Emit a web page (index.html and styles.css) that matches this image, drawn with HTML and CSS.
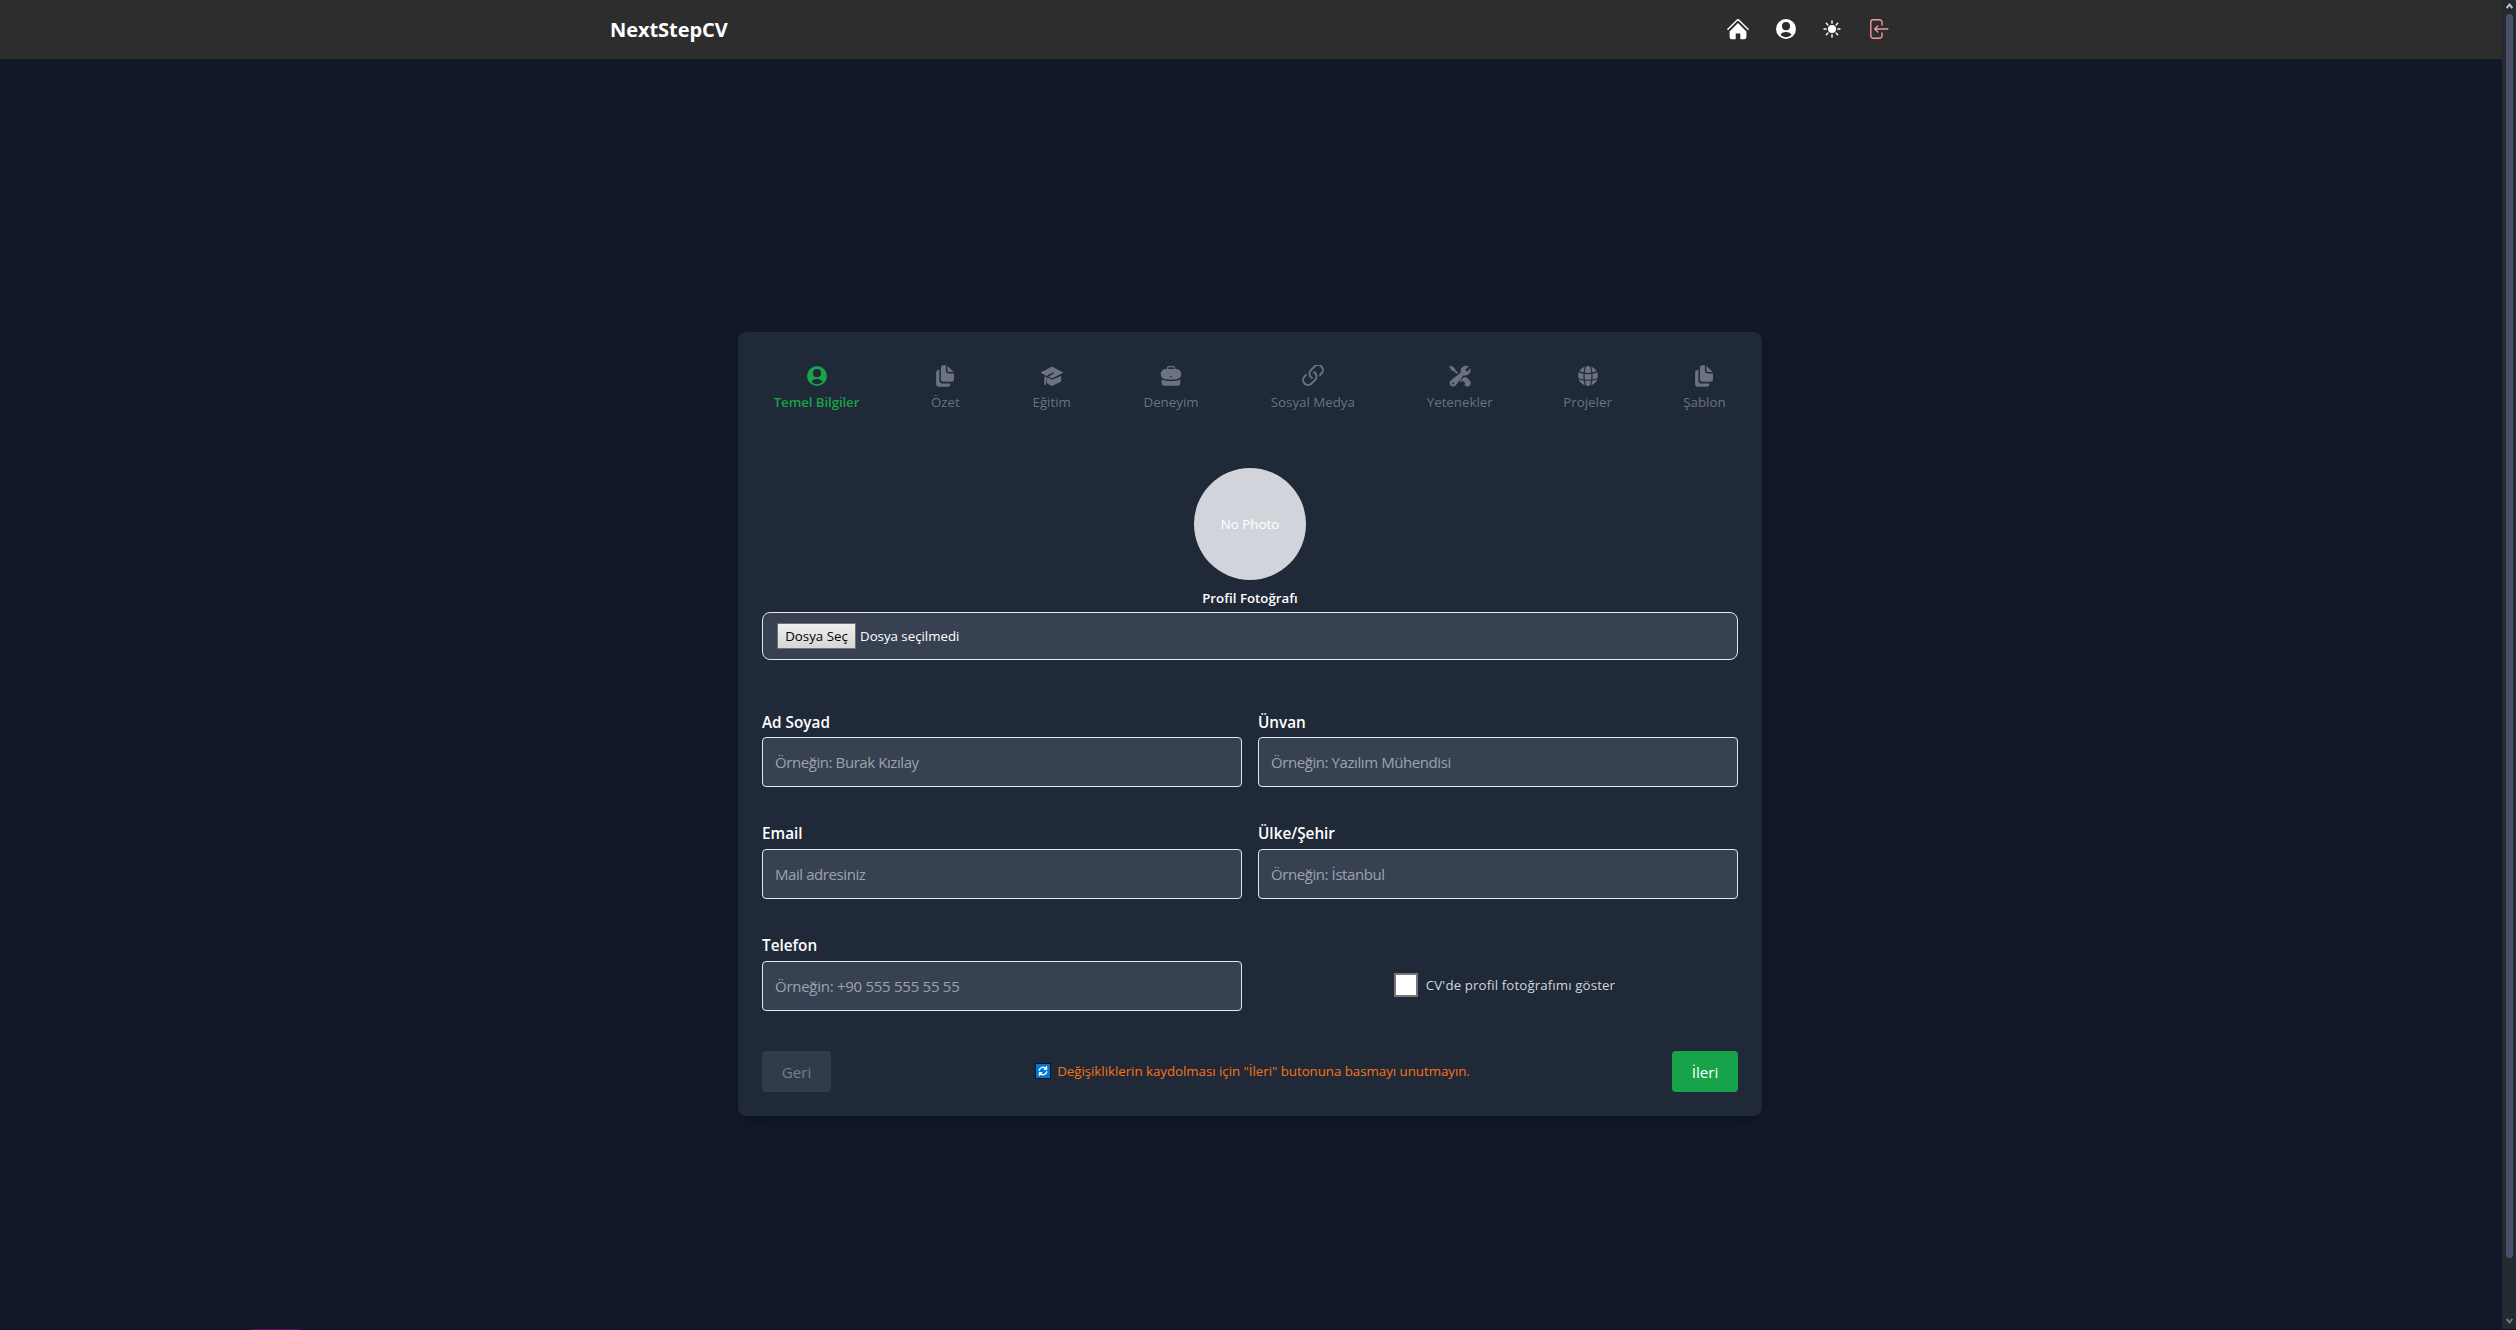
FILE: index.html
```html
<!DOCTYPE html>
<html lang="tr">
<head>
<meta charset="utf-8">
<title>NextStepCV</title>
<link rel="stylesheet" href="styles.css">
</head>
<body>
<svg class="defs" width="0" height="0">
  <symbol id="user" viewBox="0 0 24 24"><path fill-rule="evenodd" d="M12 1.1a10.9 10.9 0 1 0 0 21.8 10.9 10.9 0 0 0 0-21.8zM12 4.400a4.400 4.500 0 1 1 0 9 4.400 4.500 0 0 1 0-9zM12 15.300c3 0 5.300 1.400 6 3.100-1.500 1.600-3.700 2.500-6 2.500s-4.500-.9-6-2.500c.7-1.700 3-3.100 6-3.100z"/></symbol>
  <symbol id="copy" viewBox="0 0 24 24"><path d="M7.500 3a2.600 2.600 0 0 1 2.600-2.600H13v6.200A2.600 2.600 0 0 0 15.600 9.200H21.800v6.600a2.600 2.600 0 0 1-2.600 2.600H10.100a2.600 2.600 0 0 1-2.600-2.600zM14.600.8 21.500 7.600H16a1.400 1.400 0 0 1-1.400-1.400zM5.900 5.200v12a3 3 0 0 0 3 3h9A3 3 0 0 1 15 23.600H5.300a3 3 0 0 1-3-3V8.200c0-1.700 1.500-3 3.600-3z"/></symbol>
</svg>
<div class="page">
  <header class="header">
    <div class="bar">
      <div class="logo">NextStepCV</div>
      <nav class="nav">
        <svg class="home" viewBox="0 0 22 22"><path class="line" d="M.9 11.300 9.800 2.400a1.700 1.700 0 0 1 2.400 0l8.900 8.900"/><path d="M11 5.100 19.400 13.500V19a2.200 2.200 0 0 1-2.200 2.200H13.300v-5.800H8.700v5.800H4.800A2.200 2.200 0 0 1 2.600 19v-5.500z"/></svg>
        <svg class="person"><use href="#user"/></svg>
        <svg class="sun" viewBox="0 0 22 22"><circle cx="11" cy="11" r="4"/><path class="line" d="M11 3v2.200M11 16.800V19M3 11h2.200M16.800 11H19M5.300 5.300l1.600 1.600M15.100 15.100l1.600 1.600M5.300 16.700l1.600-1.600M15.100 6.900l1.600-1.600"/></svg>
        <svg class="exit" viewBox="0 0 20 22"><path class="line" d="M13 7V4.300a2.500 2.500 0 0 0-2.500-2.500H4.300a2.500 2.500 0 0 0-2.500 2.500v13.400a2.500 2.500 0 0 0 2.500 2.500h6.200a2.500 2.500 0 0 0 2.500-2.500V15M18.800 11H6M8.800 8 5.700 11l3.100 3"/></svg>
      </nav>
    </div>
  </header>
  <main class="main">
    <form class="card">
      <div class="tabs">
        <div class="tab active"><svg><use href="#user"/></svg><span>Temel Bilgiler</span></div>
        <div class="tab"><svg><use href="#copy"/></svg><span>Özet</span></div>
        <div class="tab"><svg viewBox="0 0 22 22"><path d="M11 1.500 21.900 7.200V8L11 13.600 8 12v-.8L13 8.300l-.7-1L6.500 10.300v1.100L.1 8V7.200zM20.200 11v5.400L11 20.900l-5-2.500V14l.9-1.500L11 14.700zM3.900 11.200 6 12.400 5.300 18l-1 1.900H3.100l.3-2.800-.3-2.500z"/></svg><span>Eğitim</span></div>
        <div class="tab"><svg viewBox="0 0 22 22"><path fill-rule="evenodd" d="M6.900 4V3a2 2 0 0 1 2-2h4.200A2 2 0 0 1 15.100 3v1h1.500A4.800 4.800 0 0 1 21.200 8.800v1c0 2.300-1.600 3.900-4 4.300-4 .7-8.400.7-12.400 0-2.400-.4-4-2-4-4.300v-1A4.800 4.800 0 0 1 5.600 4zM8.200 4h5.600V3a.8.800 0 0 0-.8-.7H9a.8.800 0 0 0-.8.700zM10.300 11v1.300h1.400V11zM1.700 14.800c6 1.800 12.600 1.800 18.600 0v3.300a2.700 2.700 0 0 1-2.700 2.700H4.400a2.700 2.700 0 0 1-2.700-2.700z"/></svg><span>Deneyim</span></div>
        <div class="tab"><svg viewBox="2.4 2.4 11.2 11.2"><path d="M4.715 6.542 3.343 7.914a3 3 0 1 0 4.243 4.243l1.828-1.829A3 3 0 0 0 8.586 5.500L8 6.086a1 1 0 0 0-.154.199 2 2 0 0 1 .861 3.337L6.880 11.450a2 2 0 1 1-2.830-2.830l.793-.792a4 4 0 0 1-.128-1.287z"/><path d="M6.586 4.672A3 3 0 0 0 7.414 9.500l.775-.776a2 2 0 0 1-.896-3.346L9.120 3.550a2 2 0 1 1 2.830 2.830l-.793.792c.112.420.155.855.128 1.287l1.372-1.372a3 3 0 1 0-4.243-4.243z"/></svg><span>Sosyal Medya</span></div>
        <div class="tab"><svg viewBox="0 0 22 22"><path fill-rule="evenodd" d="M19.900 1.200 16.300 4.700l.9 1.300 1.200.4 3-3.200c1 3.200-.8 7-4.600 7.200-1 0-1.700-.1-2.500.2L6.700 20.500c-1.300 1.300-3.700 1.500-5.100.1-1.500-1.400-1.300-3.700.1-5L11.300 8c.3-.7.200-1.400.3-2.300C11.900 1.800 16 0 19.900 1.200zM3.300 17.400v1.800h1.800v-1.800zM1.300.6 5.200 2.400 6.400 5 9.200 7.700 7.600 9.100 5 6.300 2.400 5.200.3 1.600zM14.800 12.300c.8 0 1.600 0 2.400-.2l3.600 3.400c3.100 3.600-1.400 8-5 5.100L12.200 17l3 3 1.400-1.100-3-3.300-2 1.600-.8-1.300z"/></svg><span>Yetenekler</span></div>
        <div class="tab"><svg viewBox="0 0 22 22"><circle cx="11" cy="11" r="10"/><path class="cut" d="M8.600.6C6.600 7 6.600 15 8.600 21.400M13.400.6c2 6.400 2 14.400 0 20.800M2 6.600c5.500 2.600 12.500 2.600 18 0M.8 13.700c6.500 2 13.900 2 20.400 0"/></svg><span>Projeler</span></div>
        <div class="tab"><svg><use href="#copy"/></svg><span>Şablon</span></div>
      </div>
      <div class="photo">No Photo</div>
      <div class="photo-label">Profil Fotoğrafı</div>
      <div class="file"><span class="pick">Dosya Seç</span><span class="none">Dosya seçilmedi</span></div>
      <div class="fields">
        <label class="field"><span>Ad Soyad</span><input placeholder="Örneğin: Burak Kızılay"></label>
        <label class="field"><span>Ünvan</span><input placeholder="Örneğin: Yazılım Mühendisi"></label>
        <label class="field"><span>Email</span><input placeholder="Mail adresiniz"></label>
        <label class="field"><span>Ülke/Şehir</span><input placeholder="Örneğin: İstanbul"></label>
        <label class="field"><span>Telefon</span><input class="phone" placeholder="Örneğin: +90 555 555 55 55"></label>
        <label class="check"><i class="box"></i><span>CV'de profil fotoğrafımı göster</span></label>
      </div>
      <div class="actions">
        <button class="btn back" type="button">Geri</button>
        <p class="note"><svg viewBox="0 0 16 16"><path class="edge" d="M0 0h16v16H0z"/><path class="tile" d="M1 1h14v14H1z"/><path class="line" d="M4.200 7.200A4 4 0 0 1 11 5.600M11.500 3.800v2.400H9.300M11.800 8.800A4 4 0 0 1 5 10.400M4.500 12.200V9.800h2.200"/></svg><span>Değişikliklerin kaydolması için "İleri" butonuna basmayı unutmayın.</span></p>
        <button class="btn next" type="button">İleri</button>
      </div>
    </form>
  </main>
</div>
<div class="scroll">
  <svg viewBox="0 0 7 6"><path d="M.6 5 3.500 1.500 6.400 5"/></svg>
  <div class="thumb"></div>
  <svg class="down" viewBox="0 0 7 6"><path d="M.6 1 3.500 4.500 6.400 1"/></svg>
</div>
<div class="strip"></div>
</body>
</html>
```
FILE: styles.css
```css
* { box-sizing: border-box; }
body {
  margin: 0;
  height: 1330px;
  overflow: hidden;
  display: grid;
  grid-template: 1329px 1px / 2502px 14px;
  background: #111827;
  color: #fff;
  font-family: "Open Sans", "Noto Sans", sans-serif;
  font-size: 13.3px;
}
svg { display: block; flex: none; fill: currentColor; }
.defs { position: absolute; }
.line { fill: none; stroke: currentColor; stroke-width: 1.4; stroke-linecap: round; stroke-linejoin: round; }

.header { height: 59px; background: #2d2d2d; padding-right: 2px; }
.bar { width: 1280px; height: 59px; margin: 0 auto; display: flex; justify-content: space-between; align-items: center; }
.logo { font-size: 20px; font-weight: 700; line-height: 28px; letter-spacing: -0.05px; }
.nav { display: flex; align-items: center; padding: 0 1px 1px 0; }
.nav svg { width: 22px; height: 22px; }
.nav .person { margin: 0 24px 0 26px; }
.nav .exit { width: 20px; margin-left: 26px; color: #f09a9a; }

.main { padding: 273px 2px 0 0; }
.card { width: 1024px; height: 784px; margin: 0 auto; padding: 33px 24px 24px; border-radius: 8px; background: #1f2937; box-shadow: 0 10px 15px -3px rgba(0, 0, 0, .1), 0 4px 6px -4px rgba(0, 0, 0, .1); }
.tabs { display: grid; grid-template-columns: 85px 29px 40px 55px 85px 65px 47px 43px; justify-content: space-between; padding: 0 12px; color: #6b7280; }
.tab { display: flex; flex-direction: column; align-items: center; gap: 5px; line-height: 20px; white-space: nowrap; }
.tab svg { width: 22px; height: 22px; }
.active { color: #16a34a; font-weight: 600; letter-spacing: -0.1px; }
.cut { fill: none; stroke: #1f2937; stroke-width: 1.200; }

.photo { width: 112px; height: 112px; margin: 56px auto 0; border-radius: 50%; background: #d1d5db; display: flex; align-items: center; justify-content: center; font-weight: 500; }
.photo-label { margin-top: 8px; line-height: 20px; text-align: center; font-weight: 600; }
.file { height: 48px; margin-top: 4px; padding-left: 14px; display: flex; align-items: center; gap: 4px; border: 1px solid #e5e7eb; border-radius: 8px; background: #374151; }
.none { letter-spacing: -0.02px; }
.pick { width: 79px; height: 26px; border: 1px solid #707070; background: linear-gradient(#efefef, #d6d6d6); color: #000; line-height: 24px; text-align: center; }

.fields { margin-top: 49px; display: grid; grid-template-columns: 480px 480px; gap: 34px 16px; }
.field { display: flex; flex-direction: column; gap: 4px; font-size: 15.300px; font-weight: 600; line-height: 24px; }
.field:nth-child(-n+2) span { margin: 1px 0 -1px; }
.field input { height: 50px; padding: 0 12px; border: 1px solid #e5e7eb; border-radius: 4px; background: #374151; font: 400 15px "Open Sans", "Noto Sans", sans-serif; letter-spacing: -0.42px; }
.field .phone { letter-spacing: -0.27px; }
.field input::placeholder { color: #9ca3af; opacity: 1; }
.check { display: flex; align-items: center; justify-content: center; gap: 8px; padding-top: 26px; padding-left: 13px; color: #d1d5db; letter-spacing: 0.11px; }
.box { width: 24px; height: 24px; border: 2px solid #767676; background: #fff; }

.actions { margin-top: 40px; display: flex; justify-content: space-between; align-items: center; }
.btn { height: 41px; padding: 0; border: 0; border-radius: 4px; color: #fff; font: 400 15.200px "Open Sans", "Noto Sans", sans-serif; }
.back { width: 69px; background: #323b49; color: #767d86; }
.next { width: 66px; background: #16a34a; }
.note { margin: 0 0 1px; padding-left: 2px; display: flex; align-items: center; gap: 6px; color: #f97316; letter-spacing: -0.03px; }
.note svg { width: 16px; height: 16px; color: #fff; }
.edge { fill: #0b1420; }
.tile { fill: #0078d7; }

.scroll { background: #252932; display: flex; flex-direction: column; align-items: center; padding: 3px 0 5px 1px; color: #c0c0c0; }
.scroll svg { width: 7px; height: 6px; fill: none; stroke: currentColor; stroke-width: 2; }
.thumb { width: 7px; height: 1244px; margin-top: 5px; border-radius: 4px; background: #4c4f69; }
.scroll .down { margin-top: auto; color: #777; }
.strip { grid-column: 1 / 3; background: linear-gradient(90deg, #1e0a2c 251px, #5a0f6e 251px 299px, #1e0a2c 299px); }
```
